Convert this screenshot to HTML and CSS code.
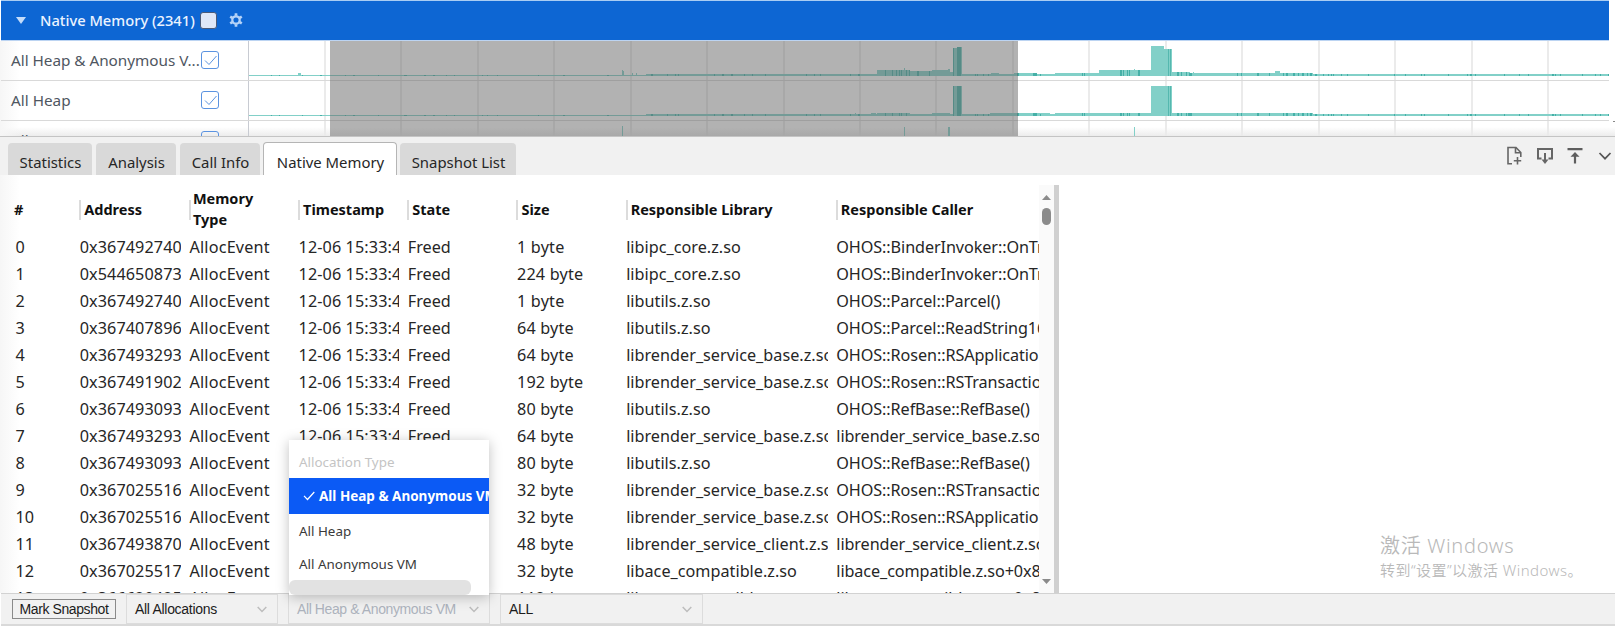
FILE: index.html
```
<!DOCTYPE html>
<html lang="en">
<head>
<meta charset="utf-8">
<title>Native Memory</title>
<link rel="stylesheet" href="styles.css">
</head>
<body>
<main class="app">
  <header class="group">
    <svg class="caret" width="10" height="7" viewBox="0 0 10 7"><path d="M0 0h10L5 7z" fill="#c4dcfa"/></svg>
    <span class="group-name">Native Memory (2341)</span>
    <span class="group-check"></span>
    <svg class="gear" width="14" height="14" viewBox="0 0 14 14"><circle cx="7" cy="7" r="3.7" fill="none" stroke="#b5d3f8" stroke-width="2.3"/><path d="M7 .3v2.5M7 11.200v2.500M1.200 3.650l2.200 1.250M10.600 9.100l2.200 1.250M1.200 10.350l2.200-1.250M10.600 4.900l2.200-1.250" stroke="#b5d3f8" stroke-width="2.700"/></svg>
  </header>
  <section class="tracks">
    <div class="labels">
      <div class="label"><span class="label-name first">All Heap &amp; Anonymous V...</span><svg class="check" viewBox="0 0 18 18"><rect x=".5" y=".5" width="17" height="17" rx="2.500"/><path d="M4 9.500l4 4L15.500 5"/></svg></div>
      <div class="label"><span class="label-name">All Heap</span><svg class="check" viewBox="0 0 18 18"><rect x=".5" y=".5" width="17" height="17" rx="2.500"/><path d="M4 9.500l4 4L15.500 5"/></svg></div>
      <div class="label"><span class="label-name">All Anonymous VM</span><svg class="check" viewBox="0 0 18 18"><rect x=".5" y=".5" width="17" height="17" rx="2.500"/><path d="M4 9.500l4 4L15.500 5"/></svg></div>
    </div>
    <svg class="chart" width="1367" height="95" viewBox="248 41 1367 95" shape-rendering="crispEdges">
      <path d="M324 41h2v95h-2zM400 41h2v95h-2zM477 41h2v95h-2zM553 41h2v95h-2zM630 41h2v95h-2zM706 41h2v95h-2zM783 41h2v95h-2zM859 41h2v95h-2zM935 41h2v95h-2zM1012 41h2v95h-2zM1088 41h2v95h-2zM1165 41h2v95h-2zM1241 41h2v95h-2zM1318 41h2v95h-2zM1394 41h2v95h-2zM1471 41h2v95h-2zM1547 41h2v95h-2z" fill="#ebebeb"/>
      <path d="M248 41h1v95h-1z" fill="#c8cbd2"/>
      <path d="M248 80h1361v1H248zM248 120h1361v1H248z" fill="#d9d9d9"/>
      <g fill="#82d0c8">
        <path d="M249 76V75H298V73H301V75H622V70H623V71H624V75H632V73H633V75H636V73H637V75H646V74H877V70H904V68H905V70H910V71H932V70H948V69H950V72H953V48H957V47H962V74H991V73H999V74H1014V73H1037V74H1055V73H1099V70H1134V69H1135V70H1151V46H1164V49H1172V72H1190V73H1193V72H1194V73H1275V71H1280V73H1313V74H1609V76z"/>
        <path d="M249 116V115H646V114H855V113H856V114H871V113H876V114H877V113H910V114H932V113H950V114H953V86H962V114H990V113H1050V114H1055V113H1151V86H1172V113H1313V114H1609V116z"/>
        <path d="M622 126h1v10h-1zM904 127h1v9h-1zM948 127h2v9h-2zM1134 127h1v9h-1z"/>
      </g>
      <g fill="#45b0a7">
        <path id="ticks" d="M271 75h1v1h-1zM279 75h1v1h-1zM302 75h1v1h-1zM320 75h2v1h-2zM345 75h1v1h-1zM353 75h2v1h-2zM378 75h1v1h-1zM404 75h3v1h-3zM424 75h2v1h-2zM433 75h2v1h-2zM446 75h1v1h-1zM454 75h1v1h-1zM482 75h1v1h-1zM487 75h1v1h-1zM497 75h1v1h-1zM538 75h1v1h-1zM563 75h2v1h-2zM607 75h2v1h-2zM651 74h2v2h-2zM667 74h1v2h-1zM675 74h1v2h-1zM678 74h1v2h-1zM714 74h1v2h-1zM722 74h2v2h-2zM731 74h2v2h-2zM744 74h1v2h-1zM752 74h1v2h-1zM765 74h1v2h-1zM806 74h1v2h-1zM814 74h1v2h-1zM820 74h1v2h-1zM850 74h1v2h-1zM858 74h2v2h-2zM975 74h1v2h-1zM977 74h1v2h-1zM983 74h1v2h-1zM988 74h1v2h-1zM1017 73h2v3h-2zM1033 73h4v3h-4zM1040 74h1v2h-1zM1082 73h1v3h-1zM1084 73h1v3h-1zM1237 73h1v3h-1zM1241 73h1v3h-1zM1257 73h2v3h-2zM1269 73h1v3h-1zM1283 73h1v3h-1zM1286 73h2v3h-2zM1293 73h2v3h-2zM1298 73h1v3h-1zM1302 73h2v3h-2zM1307 73h1v3h-1zM1310 73h2v3h-2zM1315 74h2v2h-2zM1323 74h1v2h-1zM1328 74h1v2h-1zM1331 74h1v2h-1zM1333 74h1v2h-1zM1341 74h1v2h-1zM1347 74h1v2h-1zM1368 74h1v2h-1zM1394 74h1v2h-1zM1405 74h1v2h-1zM1421 74h1v2h-1zM1424 74h1v2h-1zM1448 74h1v2h-1zM1467 74h1v2h-1zM1470 74h2v2h-2zM1475 74h1v2h-1zM1504 74h1v2h-1zM1519 74h1v2h-1zM1528 74h1v2h-1zM1552 74h2v2h-2zM1555 74h1v2h-1zM1560 74h1v2h-1zM1582 74h1v2h-1zM1595 74h1v2h-1zM1600 74h1v2h-1zM1608 74h1v2h-1z"/>
        <use href="#ticks" y="40"/>
        <path d="M885 70h1v6h-1zM892 70h1v6h-1zM896 70h1v6h-1zM899 70h1v6h-1zM901 70h1v6h-1zM906 70h1v6h-1zM909 70h1v6h-1zM917 71h2v5h-2zM929 71h1v5h-1zM1120 70h2v6h-2zM1123 70h1v6h-1zM1127 70h1v6h-1zM1129 70h1v6h-1zM1138 70h2v6h-2zM1177 72h2v4h-2zM1181 72h1v4h-1zM1186 72h1v4h-1zM1189 73h3v3h-3z"/>
        <path d="M885 113h1v3h-1zM892 113h1v3h-1zM899 113h1v3h-1zM901 113h1v3h-1zM906 113h1v3h-1zM1120 113h2v3h-2zM1123 113h1v3h-1zM1127 113h1v3h-1zM1129 113h1v3h-1zM1138 113h2v3h-2zM1177 113h2v3h-2zM1181 113h1v3h-1zM1186 113h1v3h-1zM1188 113h4v3h-4z"/>
        <path d="M953 48h1v28h-1zM957 47h4v29h-4zM953 86h1v30h-1zM957 86h4v30h-4z"/>
        <path d="M1168 49h1v27h-1zM1170 49h1v27h-1zM1168 86h1v30h-1zM1170 86h1v30h-1z" opacity=".75"/>
      </g>
      <path d="M330 41h688v95H330z" fill="#666" fill-opacity=".5"/>
      <path d="M1613 121h2v1h-2z" fill="#888"/>
    </svg>
  </section>
  <nav class="tabs">
    <span class="tab t1">Statistics</span><span class="tab t2">Analysis</span><span class="tab t3">Call Info</span><span class="tab active">Native Memory</span><span class="tab t5">Snapshot List</span>
    <div class="tools">
      <svg width="18" height="20" viewBox="0 0 18 20" fill="none" stroke="#666" stroke-width="1.600"><path d="M6 17.800H2V1.500h8l4.800 5V11M9.500 1.500v5.300h5.300M11.500 11v7.500M7.800 14.800h7.400"/></svg>
      <svg width="18" height="20" viewBox="0 0 18 20" fill="none" stroke="#666" stroke-width="2"><path d="M5.500 12.500H2V3h14v9.500h-3.500M9 7v8"/><path d="M5.500 13.500h7L9 18z" fill="#666" stroke="none"/></svg>
      <svg width="18" height="20" viewBox="0 0 18 20" fill="none" stroke="#5e5e5e" stroke-width="2.200"><path d="M1.500 3.200h15M9 17.500V9"/><path d="M4.500 10.800h9L9 6z" fill="#5e5e5e" stroke="none"/></svg>
      <svg width="14" height="20" viewBox="0 0 14 20" fill="none" stroke="#555" stroke-width="1.700"><path d="M1.500 7l5.500 5.700L12.500 7"/></svg>
    </div>
  </nav>
  <section class="body">
    <div class="grid">
      <div class="row head"><b>#</b><b>Address</b><b>Memory<br>Type</b><b>Timestamp</b><b>State</b><b>Size</b><b>Responsible Library</b><b>Responsible Caller</b></div>
      <div class="row"><i>0</i><i>0x367492740</i><i>AllocEvent</i><i>12-06 15:33:4</i><i>Freed</i><i>1 byte</i><i>libipc_core.z.so</i><i>OHOS::BinderInvoker::OnTr</i></div>
      <div class="row"><i>1</i><i>0x544650873</i><i>AllocEvent</i><i>12-06 15:33:4</i><i>Freed</i><i>224 byte</i><i>libipc_core.z.so</i><i>OHOS::BinderInvoker::OnTr</i></div>
      <div class="row"><i>2</i><i>0x367492740</i><i>AllocEvent</i><i>12-06 15:33:4</i><i>Freed</i><i>1 byte</i><i>libutils.z.so</i><i>OHOS::Parcel::Parcel()</i></div>
      <div class="row"><i>3</i><i>0x367407896</i><i>AllocEvent</i><i>12-06 15:33:4</i><i>Freed</i><i>64 byte</i><i>libutils.z.so</i><i>OHOS::Parcel::ReadString16</i></div>
      <div class="row"><i>4</i><i>0x367493293</i><i>AllocEvent</i><i>12-06 15:33:4</i><i>Freed</i><i>64 byte</i><i>librender_service_base.z.so</i><i>OHOS::Rosen::RSApplicatio</i></div>
      <div class="row"><i>5</i><i>0x367491902</i><i>AllocEvent</i><i>12-06 15:33:4</i><i>Freed</i><i>192 byte</i><i>librender_service_base.z.so</i><i>OHOS::Rosen::RSTransactio</i></div>
      <div class="row"><i>6</i><i>0x367493093</i><i>AllocEvent</i><i>12-06 15:33:4</i><i>Freed</i><i>80 byte</i><i>libutils.z.so</i><i>OHOS::RefBase::RefBase()</i></div>
      <div class="row"><i>7</i><i>0x367493293</i><i>AllocEvent</i><i>12-06 15:33:4</i><i>Freed</i><i>64 byte</i><i>librender_service_base.z.so</i><i>librender_service_base.z.so</i></div>
      <div class="row"><i>8</i><i>0x367493093</i><i>AllocEvent</i><i></i><i></i><i>80 byte</i><i>libutils.z.so</i><i>OHOS::RefBase::RefBase()</i></div>
      <div class="row"><i>9</i><i>0x367025516</i><i>AllocEvent</i><i></i><i></i><i>32 byte</i><i>librender_service_base.z.so</i><i>OHOS::Rosen::RSTransactio</i></div>
      <div class="row"><i>10</i><i>0x367025516</i><i>AllocEvent</i><i></i><i></i><i>32 byte</i><i>librender_service_base.z.so</i><i>OHOS::Rosen::RSApplicatio</i></div>
      <div class="row"><i>11</i><i>0x367493870</i><i>AllocEvent</i><i></i><i></i><i>48 byte</i><i>librender_service_client.z.so</i><i>librender_service_client.z.so</i></div>
      <div class="row"><i>12</i><i>0x367025517</i><i>AllocEvent</i><i></i><i></i><i>32 byte</i><i>libace_compatible.z.so</i><i>libace_compatible.z.so+0x8</i></div>
      <div class="row"><i>13</i><i>0x366620425</i><i>AllocEvent</i><i></i><i></i><i>112 byte</i><i>libace_compatible.z.so</i><i>libace_compatible.z.so+0x8</i></div>
    </div>
    <div class="scroll">
      <svg width="9" height="5" viewBox="0 0 9 5"><path d="M0 5h9L4.500 0z" fill="#8b8b8b"/></svg>
      <span class="thumb"></span>
      <svg class="down" width="9" height="5" viewBox="0 0 9 5"><path d="M0 0h9L4.500 5z" fill="#8b8b8b"/></svg>
    </div>
    <div class="splitter"></div>
    <aside class="side">
      <p class="wm1">激活 Windows</p>
      <p class="wm2">转到“设置”以激活 Windows。</p>
    </aside>
  </section>
  <footer class="bar">
    <span class="mark">Mark Snapshot</span>
    <div class="select s1"><span>All Allocations</span><svg width="10" height="7" viewBox="0 0 10 7"><path d="M.7 1L5 5.500 9.300 1"/></svg></div>
    <div class="select s2"><span>All Heap &amp; Anonymous VM</span><svg width="10" height="7" viewBox="0 0 10 7"><path d="M.7 1L5 5.500 9.300 1"/></svg>
      <div class="menu">
        <div class="menu-title">Allocation Type</div>
        <div class="item on"><svg width="12" height="10" viewBox="0 0 12 10"><path d="M1 4.800l3.500 3.700L11.300 1" fill="none" stroke="#fff" stroke-width="1.200"/></svg><span>All Heap &amp; Anonymous VM</span></div>
        <div class="item">All Heap</div>
        <div class="item">All Anonymous VM</div>
        <div class="menu-scroll"></div>
      </div>
    </div>
    <div class="select s3"><span>ALL</span><svg width="10" height="7" viewBox="0 0 10 7"><path d="M.7 1L5 5.500 9.300 1"/></svg></div>
  </footer>
</main>
</body>
</html>
```
FILE: styles.css
```
* { box-sizing: border-box; }
body { margin: 0; background: #fff; font-family: "Noto Sans", "Noto Sans CJK SC", sans-serif; color: #262626; }
.app { width: 1615px; height: 626px; display: flex; flex-direction: column; overflow: hidden; }
.group { width: 1608px; height: 41px; margin-left: 1px; flex: none; display: flex; align-items: center; background: #0d66d3; border-top: 1px solid #a9cdf3; border-bottom: 1px solid #bcd4f2; color: #eaf3ff; padding: 0 0 1px 14.500px; }
.group-name { width: 160px; margin-left: 14.500px; font-size: 14.700px; font-weight: 500; white-space: nowrap; }
.group-check { width: 17px; height: 17px; border: 1px solid #4a5a78; border-radius: 3px; background: #dfe7f7; }
.gear { margin-left: 11.500px; }
.tracks { height: 95px; flex: none; display: flex; overflow: hidden; background: linear-gradient(0deg, #ececec, #fff 9px); }
.labels { width: 248px; flex: none; padding-left: 1px; background: linear-gradient(90deg, #f6f6f6, transparent 20px); }
.label { height: 40px; display: flex; align-items: center; padding: 0 0 1px 10px; border-bottom: 1px solid #d9d9d9; font-size: 15.300px; color: #4f5661; }
.label-name { width: 190px; white-space: nowrap; }
.first { letter-spacing: -.03px; }
.check { width: 18px; height: 18px; flex: none; fill: none; stroke: #5b93e0; stroke-width: 1; }
.chart { flex: none; display: block; }
.tabs { height: 39px; flex: none; display: flex; align-items: flex-end; background: #f1f1f1; border-top: 1px solid #c4c4c4; padding-left: 8px; position: relative; }
.tab { height: 32px; background: #d9d9d9; border-radius: 4px 4px 0 0; font-size: 14.900px; line-height: 39px; text-align: center; margin-right: 4px; padding-left: 1px; white-space: nowrap; overflow: hidden; }
.t1 { width: 84px; }
.t2 { width: 80px; }
.t3 { width: 80px; margin-right: 3px; }
.active { width: 134px; height: 33px; background: #fff; border: 1px solid #b5b5b5; border-bottom: 0; margin-right: 3px; }
.t5 { width: 116px; }
.tools { margin-left: auto; align-self: flex-start; display: flex; gap: 12px; padding-top: 9px; padding-right: 3px; }
.tools svg:nth-child(-n+3) { margin-left: -2px; margin-right: 2px; }
.body { height: 418px; flex: none; display: flex; overflow: hidden; background: linear-gradient(90deg, #f6f6f6, #fff 20px); }
.grid { width: 1039px; flex: none; padding-top: 10px; }
.row { display: grid; grid-template-columns: 56px 101.500px 101px 101px 101px 101px 202px 203px; column-gap: 8.200px; height: 27px; padding-left: 15px; font-size: 16.200px; line-height: 27px; }
.row i { font-style: normal; white-space: nowrap; overflow: hidden; padding-left: .5px; letter-spacing: .02px; }
.row i:nth-child(2) { letter-spacing: .09px; }
.row i:nth-child(3) { letter-spacing: .2px; }
.row i:nth-child(4) { letter-spacing: .1px; }
.row i:nth-child(6) { letter-spacing: .2px; }
.row i:nth-child(8) { letter-spacing: -.09px; }
.head { height: 49px; align-items: center; font-size: 14.500px; line-height: 21px; color: #111; }
.head b { border-left: 2px solid #dcdcdc; padding-left: 3px; height: 20px; display: flex; align-items: center; }
.head b:nth-child(3) { padding: 0 0 2px 2px; }
.head b:first-child { border: 0; padding: 0; margin-left: -1px; }
.scroll { width: 15px; margin-top: 10px; padding: 10px 0 9px; background: #fafafa; display: flex; flex-direction: column; align-items: center; flex: none; }
.thumb { width: 9px; height: 17px; border-radius: 5px; background: #8b8b8b; margin-top: 8px; }
.down { margin-top: auto; }
.splitter { width: 5px; margin-top: 10px; background: #d0d0d0; flex: none; }
.side { flex: 1; padding: 357px 0 0 321px; color: #b9b9b9; font-weight: 350; white-space: nowrap; }
.side p { margin: 0; }
.wm1 { font-size: 20px; line-height: 28px; letter-spacing: .7px; }
.wm2 { font-size: 15px; line-height: 20px; letter-spacing: .45px; }
.bar { height: 33px; flex: none; display: flex; align-items: center; margin-left: 1px; background: #f1f1f1; border-top: 1px solid #d2d2d2; border-bottom: 2px solid #d9d9d9; padding-left: 11px; font: 14px "Liberation Sans", Arial, sans-serif; color: #1c1c1c; }
.mark { width: 104px; height: 20px; border: 1px solid #8a8a8a; line-height: 18px; text-align: center; letter-spacing: -.4px; white-space: nowrap; }
.select { height: 30px; border: 1px solid #dcdcdc; display: flex; align-items: center; justify-content: space-between; padding: 0 10px 0 8px; position: relative; white-space: nowrap; letter-spacing: -.3px; }
.select > svg { fill: none; stroke: #bdbdbd; stroke-width: 1.500; }
.s1 { width: 152px; margin-left: 10px; }
.s2 { width: 202px; margin-left: 10px; color: #adb3bd; letter-spacing: -.4px; }
.s3 { width: 203px; margin-left: 10px; }
.menu { position: absolute; left: 0; bottom: 28px; width: 200px; height: 155px; background: #fff; overflow: hidden; box-shadow: 0 2px 12px rgba(0,0,0,.25); font-family: "Noto Sans", sans-serif; font-size: 13.400px; letter-spacing: 0; color: #3a3a3a; }
.menu-title { height: 38px; padding: 6px 10px 0; line-height: 32px; color: #c4c4c4; }
.item { height: 33px; line-height: 33px; padding-left: 10px; }
.on { height: 36px; background: #0b5af5; color: #fff; font-weight: 700; display: flex; align-items: center; gap: 4px; padding-left: 14px; margin-bottom: 1px; font-size: 13.500px; }
.on svg { flex: none; }
.menu-scroll { width: 182px; height: 15px; border-radius: 6px; background: #e2e2e2; margin-top: -1px; }
```
